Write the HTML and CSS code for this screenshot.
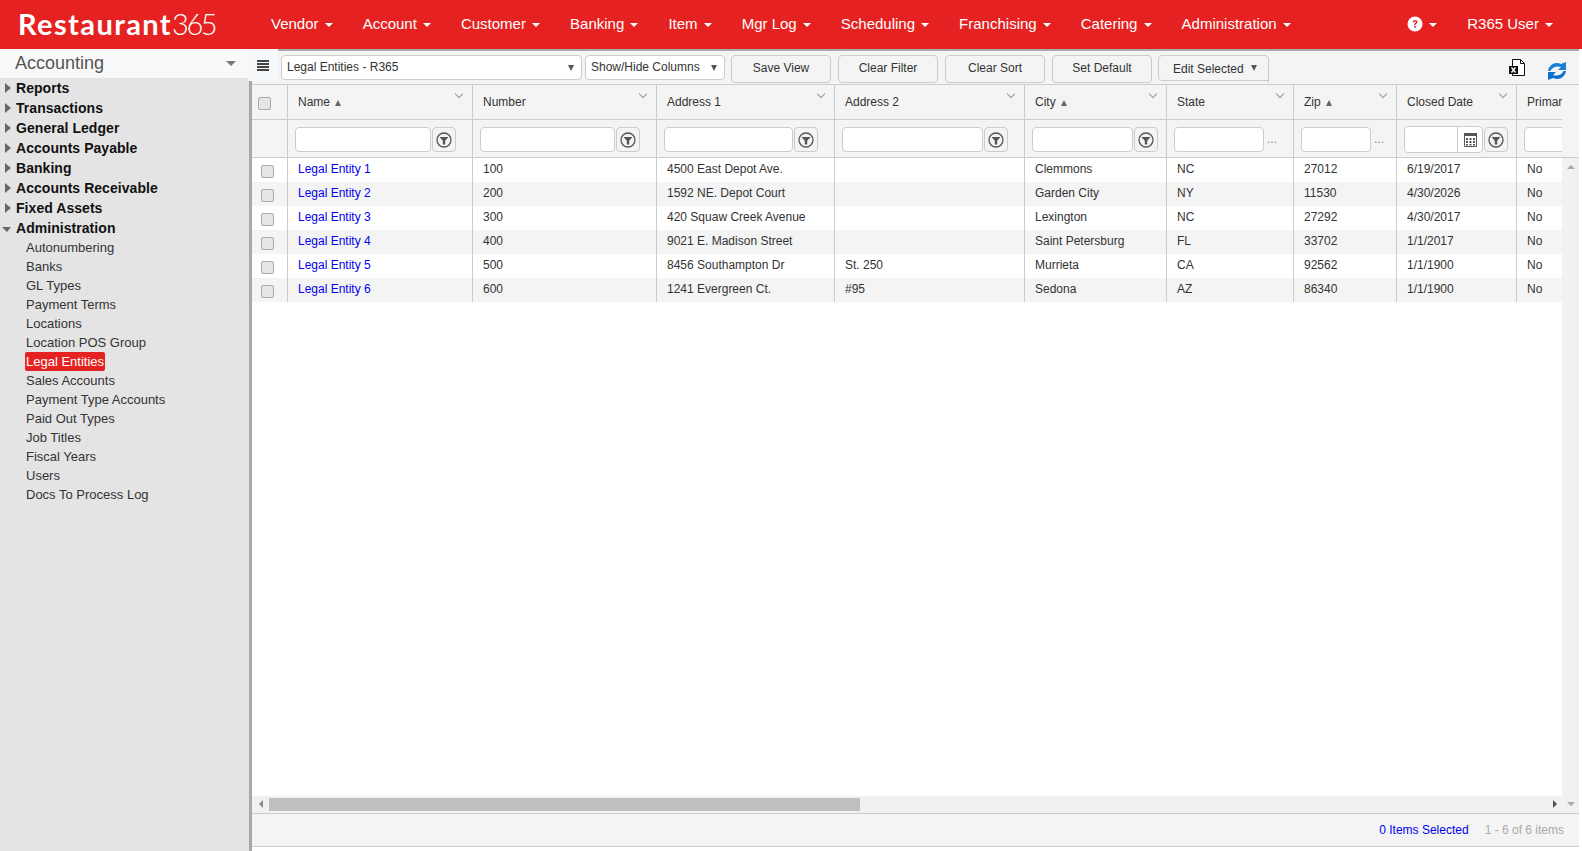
FILE: index.html
```html
<!DOCTYPE html>
<html lang="en">
<head>
    <meta charset="UTF-8">
    <title>Legal Entities - Restaurant365</title>
    <link rel="stylesheet" href="styles.css">
</head>
<body>
    <div class="navbar">
        <div class="logo"><b>Restaurant</b><span>365</span></div>
        <ul class="nav-menu">
            <li>Vendor<i class="caret"></i></li>
            <li>Account<i class="caret"></i></li>
            <li>Customer<i class="caret"></i></li>
            <li>Banking<i class="caret"></i></li>
            <li>Item<i class="caret"></i></li>
            <li>Mgr Log<i class="caret"></i></li>
            <li>Scheduling<i class="caret"></i></li>
            <li>Franchising<i class="caret"></i></li>
            <li>Catering<i class="caret"></i></li>
            <li>Administration<i class="caret"></i></li>
        </ul>
        <ul class="nav-right">
            <li>
                <svg width="16" height="16" viewBox="0 0 16 16"><circle cx="8" cy="8" r="7.5" fill="#fff"/><path d="M5.6 6.2c.1-1.5 1.1-2.3 2.5-2.3s2.4.8 2.4 2c0 1-.6 1.5-1.2 1.9-.6.4-.8.6-.8 1.2H7.1c0-1 .3-1.5 1-2 .5-.3.8-.6.8-1s-.3-.7-.8-.7-.9.3-1 .9z" fill="#e52221"/><rect x="7.1" y="10" width="1.7" height="1.7" fill="#e52221"/></svg>
                <i class="caret"></i>
            </li>
            <li>R365 User<i class="caret"></i></li>
        </ul>
    </div>

    <div class="page">
        <div class="sidebar">
            <div class="module-select">Accounting<i class="module-caret"></i></div>
            <ul class="tree">
                <li><i class="arrow-right"></i>Reports</li>
                <li><i class="arrow-right"></i>Transactions</li>
                <li><i class="arrow-right"></i>General Ledger</li>
                <li><i class="arrow-right"></i>Accounts Payable</li>
                <li><i class="arrow-right"></i>Banking</li>
                <li><i class="arrow-right"></i>Accounts Receivable</li>
                <li><i class="arrow-right"></i>Fixed Assets</li>
                <li><i class="arrow-down"></i>Administration</li>
            </ul>
            <ul class="subtree">
                <li><span>Autonumbering</span></li>
                <li><span>Banks</span></li>
                <li><span>GL Types</span></li>
                <li><span>Payment Terms</span></li>
                <li><span>Locations</span></li>
                <li><span>Location POS Group</span></li>
                <li><span class="active">Legal Entities</span></li>
                <li><span>Sales Accounts</span></li>
                <li><span>Payment Type Accounts</span></li>
                <li><span>Paid Out Types</span></li>
                <li><span>Job Titles</span></li>
                <li><span>Fiscal Years</span></li>
                <li><span>Users</span></li>
                <li><span>Docs To Process Log</span></li>
            </ul>
        </div>

        <div class="main">
            <div class="toolbar">
                <div class="menu-btn">
                    <svg width="12" height="11" viewBox="0 0 12 11"><path d="M0 0h12v2H0zM0 3h12v2H0zM0 6h12v2H0zM0 9h12v2H0z" fill="#444"/></svg>
                </div>
                <div class="dropdown view-select">Legal Entities - R365<i class="tri"></i></div>
                <div class="dropdown columns-select">Show/Hide Columns<i class="tri"></i></div>
                <button class="tool-btn">Save View</button>
                <button class="tool-btn">Clear Filter</button>
                <button class="tool-btn">Clear Sort</button>
                <button class="tool-btn">Set Default</button>
                <button class="tool-btn edit-btn">Edit Selected<i class="tri"></i></button>
                <div class="tool-icons">
                    <svg class="excel" width="17" height="17" viewBox="0 0 17 17"><path d="M3.500.5h8l4 4v12h-12z" fill="#fff" stroke="#111"/><path d="M11.500.5v4h4" fill="none" stroke="#111"/><rect y="7" width="9" height="8" fill="#111"/><path d="M2.500 8.500l4 5M6.500 8.500l-4 5" stroke="#fff" stroke-width="1.300"/></svg>
                    <svg class="refresh" width="18" height="18" viewBox="0 0 18 18"><path id="refresh-arc" d="M0 9C1 3 7-1 13 2l5-2v8h-8l3-3C9 3.500 4 5 2.500 9z" fill="#1a7fd4"/><path d="M0 9C1 3 7-1 13 2l5-2v8h-8l3-3C9 3.500 4 5 2.500 9z" fill="#0e6fd0" transform="rotate(180 9 9)"/></svg>
                </div>
            </div>

            <div class="grid">
                <div class="grid-main">
                    <div class="grid-content">
                        <table class="grid-table">
                            <colgroup>
                                <col class="col-check"><col class="col-name"><col class="col-number"><col class="col-addr1"><col class="col-addr2"><col class="col-city"><col class="col-state"><col class="col-zip"><col class="col-closed"><col class="col-primary">
                            </colgroup>
                            <thead>
                                <tr class="head-row">
                                    <th class="check-cell"><input type="checkbox" class="check head-check"></th>
                                    <th>Name<i class="sort"></i><i class="chevron"></i></th>
                                    <th>Number<i class="chevron"></i></th>
                                    <th>Address 1<i class="chevron"></i></th>
                                    <th>Address 2<i class="chevron"></i></th>
                                    <th>City<i class="sort"></i><i class="chevron"></i></th>
                                    <th>State<i class="chevron"></i></th>
                                    <th>Zip<i class="sort"></i><i class="chevron"></i></th>
                                    <th>Closed Date<i class="chevron"></i></th>
                                    <th>Primary Location<i class="chevron"></i></th>
                                </tr>
                                <tr class="filter-row">
                                    <th></th>
                                    <th><div class="filter"><input type="text"><span class="filter-btn"><svg class="funnel" viewBox="0 0 16 16"><use href="#funnel"/></svg></span></div></th>
                                    <th><div class="filter"><input type="text"><span class="filter-btn"><svg class="funnel" viewBox="0 0 16 16"><use href="#funnel"/></svg></span></div></th>
                                    <th><div class="filter"><input type="text"><span class="filter-btn"><svg class="funnel" viewBox="0 0 16 16"><use href="#funnel"/></svg></span></div></th>
                                    <th><div class="filter"><input type="text"><span class="filter-btn"><svg class="funnel" viewBox="0 0 16 16"><use href="#funnel"/></svg></span></div></th>
                                    <th><div class="filter filter-city"><input type="text"><span class="filter-btn"><svg class="funnel" viewBox="0 0 16 16"><use href="#funnel"/></svg></span></div></th>
                                    <th><div class="filter filter-state"><input type="text"><span class="dots">...</span></div></th>
                                    <th><div class="filter filter-zip"><input type="text"><span class="dots">...</span></div></th>
                                    <th>
                                        <div class="filter filter-date">
                                            <div class="date-box">
                                                <input type="text">
                                                <span class="date-btn">
                                                    <svg width="13" height="14" viewBox="0 0 13 14"><path d="M.5 1.500h12v12H.5z" fill="none" stroke="#555"/><path d="M0 0h13v3H0z" fill="#555"/><path d="M2 5h2v2H2zM5.500 5h2v2h-2zM9 5h2v2H9zM2 8h2v2H2zM5.500 8h2v2h-2zM9 8h2v2H9zM2 11h2v1.500H2zM5.500 11h2v1.500h-2zM9 11h2v1.500H9z" fill="#555"/></svg>
                                                </span>
                                            </div>
                                            <span class="filter-btn"><svg class="funnel" viewBox="0 0 16 16"><use href="#funnel"/></svg></span>
                                        </div>
                                    </th>
                                    <th><div class="filter"><input type="text"></div></th>
                                </tr>
                            </thead>
                            <tbody>
                                <tr>
                                    <td class="check-cell"><input type="checkbox" class="check"></td>
                                    <td><a href="#">Legal Entity 1</a></td><td>100</td><td>4500 East Depot Ave.</td><td></td><td>Clemmons</td><td>NC</td><td>27012</td><td>6/19/2017</td><td>No</td>
                                </tr>
                                <tr>
                                    <td class="check-cell"><input type="checkbox" class="check"></td>
                                    <td><a href="#">Legal Entity 2</a></td><td>200</td><td>1592 NE. Depot Court</td><td></td><td>Garden City</td><td>NY</td><td>11530</td><td>4/30/2026</td><td>No</td>
                                </tr>
                                <tr>
                                    <td class="check-cell"><input type="checkbox" class="check"></td>
                                    <td><a href="#">Legal Entity 3</a></td><td>300</td><td>420 Squaw Creek Avenue</td><td></td><td>Lexington</td><td>NC</td><td>27292</td><td>4/30/2017</td><td>No</td>
                                </tr>
                                <tr>
                                    <td class="check-cell"><input type="checkbox" class="check"></td>
                                    <td><a href="#">Legal Entity 4</a></td><td>400</td><td>9021 E. Madison Street</td><td></td><td>Saint Petersburg</td><td>FL</td><td>33702</td><td>1/1/2017</td><td>No</td>
                                </tr>
                                <tr>
                                    <td class="check-cell"><input type="checkbox" class="check"></td>
                                    <td><a href="#">Legal Entity 5</a></td><td>500</td><td>8456 Southampton Dr</td><td>St. 250</td><td>Murrieta</td><td>CA</td><td>92562</td><td>1/1/1900</td><td>No</td>
                                </tr>
                                <tr>
                                    <td class="check-cell"><input type="checkbox" class="check"></td>
                                    <td><a href="#">Legal Entity 6</a></td><td>600</td><td>1241 Evergreen Ct.</td><td>#95</td><td>Sedona</td><td>AZ</td><td>86340</td><td>1/1/1900</td><td>No</td>
                                </tr>
                            </tbody>
                        </table>
                    </div>
                    <div class="hscroll">
                        <i class="sb-left"></i>
                        <div class="hscroll-track"><div class="hscroll-thumb"></div></div>
                        <i class="sb-right"></i>
                    </div>
                </div>
                <div class="vscroll">
                    <div class="vscroll-head"></div>
                    <div class="vscroll-track"><i class="sb-up"></i><i class="sb-down"></i></div>
                </div>
            </div>

            <div class="grid-footer">
                <span class="selected-count">0 Items Selected</span>
                <span class="item-count">1 - 6 of 6 items</span>
            </div>
        </div>
    </div>

    <svg class="icon-defs" width="0" height="0">
        <symbol id="funnel" viewBox="0 0 16 16">
            <circle cx="8" cy="8" r="7" fill="none" stroke="#555" stroke-width="1.300"/>
            <path d="M3.500 5h9L9.200 8.800V12.500H6.800V8.800z" fill="#555"/>
        </symbol>
    </svg>
</body>
</html>
```

FILE: styles.css
```css
* {
    margin: 0;
    padding: 0;
    box-sizing: border-box;
}
html, body {
    height: 100%;
}
body {
    display: flex;
    flex-direction: column;
    overflow: hidden;
    background: #fff;
    color: #333;
    font-family: "Liberation Sans", Arial, sans-serif;
    font-size: 12px;
}
ul {
    list-style: none;
}
i {
    display: inline-block;
}

/* Top bar */
.navbar {
    height: 49px;
    flex: none;
    display: flex;
    align-items: center;
    padding-bottom: 2px;
    background: #e52221;
    color: #fff;
}
.logo {
    width: 256px;
    padding-left: 18px;
    font-family: Lato, sans-serif;
    font-size: 29px;
    white-space: nowrap;
}
.logo b {
    font-weight: 700;
    letter-spacing: 1.4px;
}
.logo span {
    font-weight: 300;
    letter-spacing: -2.5px;
}
.nav-menu, .nav-right {
    display: flex;
    align-items: center;
    font-size: 15px;
}
.nav-menu li, .nav-right li {
    display: flex;
    align-items: center;
    padding: 0 15px;
}
.nav-right {
    margin-left: auto;
    padding-right: 14px;
}
.nav-right li:first-child {
    padding-right: 15px;
}
.caret {
    width: 0;
    height: 0;
    margin-left: 6.1px;
    margin-top: 2px;
    border-top: 4px solid #fff;
    border-left: 4px solid transparent;
    border-right: 4px solid transparent;
}

/* Sidebar */
.page {
    flex: 1;
    min-height: 0;
    display: flex;
}
.sidebar {
    width: 249px;
    flex: none;
    background: #e4e4e4;
}
.module-select {
    height: 29px;
    display: flex;
    align-items: center;
    justify-content: space-between;
    padding: 0 13px 0 15px;
    background: #f9f9f9;
    color: #555;
    font-size: 18px;
}
.module-caret {
    width: 0;
    height: 0;
    border-top: 5px solid #777;
    border-left: 5px solid transparent;
    border-right: 5px solid transparent;
}
.tree li {
    height: 20px;
    display: flex;
    align-items: center;
    color: #111;
    font-size: 14px;
    font-weight: bold;
    letter-spacing: 0.05px;
}
.arrow-right {
    width: 0;
    height: 0;
    margin: 0 5px 0 5px;
    border-left: 6px solid #666;
    border-top: 5px solid transparent;
    border-bottom: 5px solid transparent;
}
.arrow-down {
    width: 0;
    height: 0;
    margin: 2px 5px 0 2px;
    border-top: 5px solid #666;
    border-left: 5px solid transparent;
    border-right: 4px solid transparent;
}
.subtree li {
    height: 19px;
    display: flex;
    align-items: center;
    padding-left: 25px;
    font-size: 13px;
    color: #333;
}
.subtree span {
    padding: 1px;
    border-radius: 2px;
    line-height: 17px;
}
.subtree .active {
    background: #e52221;
    color: #fff;
}

/* Main area */
.main {
    flex: 1;
    min-width: 0;
    display: flex;
    flex-direction: column;
    padding-right: 3px;
    padding-bottom: 4px;
    border-left: 3px solid #a8a8a8;
}
.toolbar {
    height: 35px;
    flex: none;
    display: flex;
    align-items: flex-start;
    background: #f4f4f4;
    border-top: 2px solid #aaa;
}
.menu-btn {
    width: 30px;
    height: 32px;
    margin: -2px 0 0 -4px;
    flex: none;
    display: flex;
    align-items: center;
    justify-content: center;
    background: #f5f9fc;
    position: relative;
}
.dropdown {
    height: 25px;
    margin-top: 4px;
    display: flex;
    align-items: center;
    justify-content: space-between;
    padding: 0 7px 2px 5px;
    background: #fff;
    border: 1px solid #ccc;
    border-radius: 4px;
    color: #333;
}
.dropdown .tri {
    margin-top: 2px;
}
.view-select {
    width: 301px;
    margin-left: 3px;
}
.columns-select {
    width: 140px;
    margin-left: 3px;
}
.tri {
    width: 0;
    height: 0;
    border-top: 6px solid #555;
    border-left: 3.5px solid transparent;
    border-right: 3.5px solid transparent;
}
.tool-btn {
    width: 100px;
    height: 28px;
    margin-top: 4px;
    margin-left: 7px;
    padding-bottom: 2px;
    background: #f4f4f4;
    border: 1px solid #ccc;
    border-radius: 4px;
    color: #333;
    font-family: inherit;
    font-size: 12px;
    flex: none;
}
.tool-btn:nth-of-type(1) {
    margin-left: 6px;
}
.edit-btn {
    width: 111px;
    height: 26px;
    margin-left: 6px;
    display: flex;
    align-items: center;
    padding: 2px 0 0 14px;
    gap: 7px;
    border-bottom-right-radius: 0;
    position: relative;
}
.edit-btn .tri {
    margin-bottom: 3px;
}
.edit-btn::after {
    content: "";
    position: absolute;
    top: 100%;
    right: -1px;
    width: 1px;
    height: 3px;
    background: #ccc;
}
.tool-icons {
    margin-left: auto;
    display: flex;
    align-items: flex-start;
    gap: 22px;
    padding: 9px 13px 0 0;
}
.excel {
    margin-top: -1px;
}
.refresh {
    margin-top: 2px;
}

/* Grid */
.grid {
    flex: 1;
    min-height: 0;
    display: flex;
}
.grid-main {
    flex: 1;
    min-width: 0;
    display: flex;
    flex-direction: column;
}
.grid-content {
    flex: 1;
    min-height: 0;
    overflow: hidden;
}
.grid-table {
    width: 1401px;
    table-layout: fixed;
    border-collapse: separate;
    border-spacing: 0;
}
.col-check { width: 36px; }
.col-name { width: 185px; }
.col-number { width: 184px; }
.col-addr1 { width: 178px; }
.col-addr2 { width: 190px; }
.col-city { width: 142px; }
.col-state { width: 127px; }
.col-zip { width: 103px; }
.col-closed { width: 120px; }
.col-primary { width: 136px; }

.grid-table th, .grid-table td {
    border-right: 1px solid #ccc;
    text-align: left;
    font-weight: normal;
    white-space: nowrap;
    overflow: hidden;
}
.grid-table thead th {
    background: #f4f4f4;
    border-bottom: 1px solid #ccc;
}
.head-row th {
    height: 36px;
    padding: 0 0 0 10px;
    position: relative;
    border-top: 1px solid #ccc;
}
.filter-row th {
    height: 38px;
    padding: 2px 16px 0 7px;
}
.filter-row th:last-child {
    padding-right: 0;
}
.sort {
    width: 0;
    height: 0;
    margin-left: 5px;
    border-bottom: 6px solid #666;
    border-left: 3.5px solid transparent;
    border-right: 3.5px solid transparent;
}
.chevron {
    position: absolute;
    top: 6px;
    right: 10px;
    width: 6px;
    height: 6px;
    transform: rotate(45deg);
    border-right: 1px solid #999;
    border-bottom: 1px solid #999;
}
.filter {
    display: flex;
    align-items: center;
    gap: 1px;
}
.filter input {
    flex: 1;
    min-width: 0;
    width: 100%;
    height: 25px;
    background: #fff;
    border: 1px solid #ccc;
    border-radius: 4px;
}
.filter-btn {
    width: 24px;
    height: 25px;
    flex: none;
    display: flex;
    align-items: center;
    justify-content: center;
    border: 1px solid #ccc;
    border-radius: 4px;
}
.funnel {
    width: 16px;
    height: 16px;
}
.icon-defs {
    position: absolute;
}
.dots {
    width: 10px;
    margin: 0 0 1px 2px;
    color: #888;
    line-height: 14px;
}
.filter-city {
    margin-right: -8px;
}
.filter-zip {
    margin-right: -4px;
}
.filter-date {
    margin-right: -8px;
}
.date-box {
    flex: 1;
    min-width: 0;
    height: 27px;
    display: flex;
    background: #fff;
    border: 1px solid #ccc;
    border-radius: 4px;
}
.date-box input {
    height: 100%;
    border: none;
    border-right: 1px solid #ccc;
    border-radius: 4px 0 0 4px;
}
.date-btn {
    width: 24px;
    flex: none;
    display: flex;
    align-items: center;
    justify-content: center;
}
.grid-table th.check-cell {
    padding-left: 6px;
}
.head-check {
    margin-top: 2px;
}
.grid-table td.check-cell {
    padding: 3px 0 0 9px;
}
.check {
    appearance: none;
    display: block;
    width: 13px;
    height: 13px;
    background: #e6e6e6;
    border: 1px solid #aaa;
    border-radius: 2px;
}
.grid-table tbody td {
    height: 24px;
    padding: 0 0 3px 10px;
    color: #333;
}
.grid-table tbody tr:nth-child(even) td {
    background: #f4f4f4;
}
.grid-table a {
    color: #0000ee;
    text-decoration: none;
}
.hscroll {
    height: 18px;
    flex: none;
    display: flex;
    align-items: center;
    background: #f1f1f1;
    border-bottom: 1px solid #ccc;
    padding-bottom: 1px;
}
.hscroll-track {
    flex: 1;
    height: 13px;
}
.hscroll-thumb {
    width: 591px;
    height: 13px;
    background: #bfbfbf;
}
.sb-left {
    width: 0;
    height: 0;
    margin: 0 6px 0 7px;
    border-right: 4px solid #888;
    border-top: 4px solid transparent;
    border-bottom: 4px solid transparent;
}
.sb-right {
    width: 0;
    height: 0;
    margin: 0 5px 0 5px;
    border-left: 4px solid #505050;
    border-top: 4px solid transparent;
    border-bottom: 4px solid transparent;
}
.vscroll {
    width: 17px;
    flex: none;
    display: flex;
    flex-direction: column;
    background: #f1f1f1;
}
.vscroll-head {
    height: 74px;
    flex: none;
    background: #f4f4f4;
    border-top: 1px solid #ccc;
    border-bottom: 1px solid #ccc;
}
.vscroll-track {
    flex: 1;
    display: flex;
    flex-direction: column;
    justify-content: space-between;
    align-items: center;
    padding: 7px 0;
    border-bottom: 1px solid #ccc;
}
.sb-up {
    width: 0;
    height: 0;
    border-bottom: 4px solid #aaa;
    border-left: 4px solid transparent;
    border-right: 4px solid transparent;
}
.sb-down {
    width: 0;
    height: 0;
    border-top: 4px solid #aaa;
    border-left: 4px solid transparent;
    border-right: 4px solid transparent;
}
.grid-footer {
    height: 33px;
    flex: none;
    display: flex;
    align-items: center;
    justify-content: flex-end;
    gap: 16px;
    padding: 0 15px 0 0;
    background: #f4f4f4;
    border-bottom: 1px solid #ccc;
}
.selected-count {
    color: #0000ee;
}
.item-count {
    color: #aaa;
}
```
